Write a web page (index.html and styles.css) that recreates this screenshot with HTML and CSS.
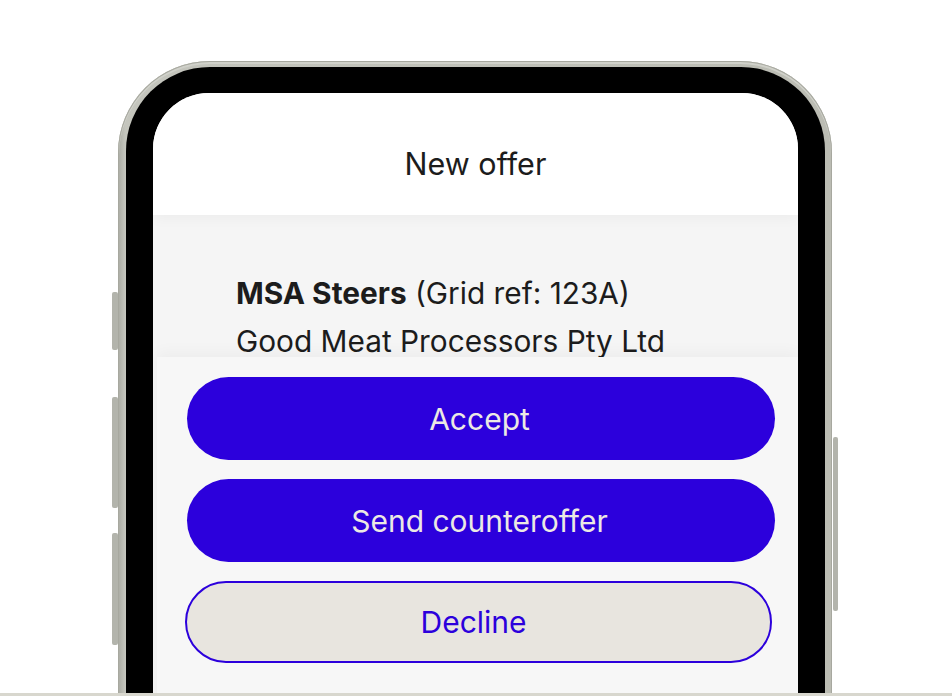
FILE: index.html
```html
<!DOCTYPE html>
<html lang="en">
<head>
<meta charset="utf-8">
<title>New offer</title>
<link rel="stylesheet" href="styles.css">
</head>
<body>
<div class="stage">
  <div class="phone">
    <span class="key key-l1"></span>
    <span class="key key-l2"></span>
    <span class="key key-l3"></span>
    <span class="key key-r1"></span>
    <div class="bezel">
      <div class="screen">
        <header class="hdr">New offer</header>
        <main class="content">
          <p class="line"><b>MSA Steers</b> (Grid ref: 123A)</p>
          <p class="line line-last">Good Meat Processors Pty Ltd</p>
        </main>
        <div class="sheet">
          <button class="btn btn-primary">Accept</button>
          <button class="btn btn-primary">Send counteroffer</button>
          <button class="btn btn-outline">Decline</button>
        </div>
      </div>
    </div>
  </div>
</div>
<div class="floor"></div>
</body>
</html>
```

FILE: styles.css
```css
html, body {
  margin: 0;
  padding: 0;
  background: #ffffff;
  font-family: Inter, "Noto Sans", sans-serif;
  overflow: hidden;
}

.stage {
  height: 693px;
  overflow: hidden;
  display: flex;
  justify-content: flex-start;
  padding-left: 118px;
  padding-top: 61px;
  box-sizing: border-box;
}

.phone {
  position: relative;
  width: 714px;
  height: 820px;
  flex: none;
  box-sizing: border-box;
  padding: 6px 7px 0 8px;
  border-radius: 92px;
  background: linear-gradient(90deg, #a9aaa2 0%, #c4c5bd 1%, #bbbcb3 100%);
  box-shadow: inset 0 0 0 1px #a7a89f, inset 0 2px 0 1px #d0d1ca;
}

.key {
  position: absolute;
  width: 6px;
  background: #b3b4ac;
  border-radius: 2px;
}
.key-l1 { left: -6px; top: 231px; height: 58px; }
.key-l2 { left: -6px; top: 336px; height: 111px; }
.key-l3 { left: -6px; top: 472px; height: 112px; }
.key-r1 { right: -6px; top: 376px; height: 174px; width: 5px; }

.bezel {
  height: 100%;
  box-sizing: border-box;
  padding: 26px 27px 0 27px;
  background: #000000;
  border-radius: 84px 84px 0 0;
}

.screen {
  height: 100%;
  background: #f5f5f5;
  border-radius: 56px 56px 0 0;
  overflow: hidden;
  display: flex;
  flex-direction: column;
}

.hdr {
  position: relative;
  z-index: 2;
  height: 122px;
  flex: none;
  background: #ffffff;
  display: flex;
  align-items: center;
  justify-content: center;
  padding-top: 19px;
  box-sizing: border-box;
  font-size: 30.5px;
  color: #1c1c1c;
  box-shadow: 0 3px 14px rgba(0, 0, 0, 0.04);
}

.content {
  height: 142px;
  flex: none;
  box-sizing: border-box;
  padding: 54px 0 0 83px;
}

.line {
  margin: 0;
  font-size: 29.8px;
  line-height: 48px;
  color: #1c1c1c;
  white-space: nowrap;
}
.line b {
  font-weight: 700;
}
.line-last {
  line-height: 32px;
  margin-top: 8px;
}

.sheet {
  position: relative;
  z-index: 2;
  flex: 1;
  margin-left: 4px;
  background: #f7f7f7;
  padding: 20px 23px 0 30px;
  display: flex;
  flex-direction: column;
  gap: 19px;
  box-shadow: 0 -5px 14px rgba(0, 0, 0, 0.035);
}

.btn {
  display: flex;
  align-items: center;
  justify-content: center;
  height: 83px;
  border-radius: 42px;
  font-family: Inter, "Noto Sans", sans-serif;
  font-size: 30px;
  border: none;
  padding: 0 3px 0 0;
  box-sizing: border-box;
}

.btn-primary {
  background: #2c00dc;
  color: #ece9e4;
}

.btn-outline {
  height: 82px;
  margin: 0 3px 0 -2px;
  background: #e8e5df;
  color: #2c00dc;
  border: 2.5px solid #2c00dc;
  padding-right: 10px;
}

.floor {
  height: 3px;
  background: #d8d7ce;
}
```
